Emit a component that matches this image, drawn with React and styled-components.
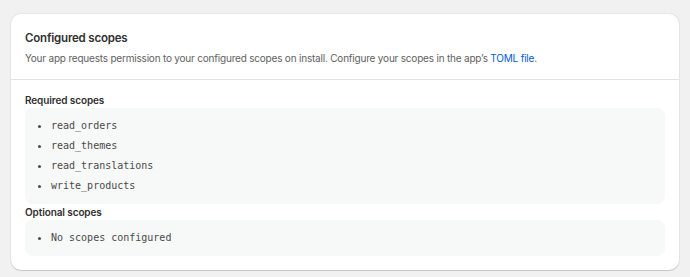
import React from 'react'
import styled, { createGlobalStyle } from 'styled-components'

const required = ['read_orders', 'read_themes', 'read_translations', 'write_products']
const optional = []

const ScopesCard = () => {
  return (
    <Page>
      <GlobalStyle />
      <Card>
        <Header>
          <Title>Configured scopes</Title>
          <Description>
            Your app requests permission to your configured scopes on install. Configure your scopes in the app’s{' '}
            <Link href="#">TOML file</Link>.
          </Description>
        </Header>
        <Body>
          <Label>Required scopes</Label>
          <ScopeBox>
            {required.map((s) => (
              <Scope key={s}>{s}</Scope>
            ))}
          </ScopeBox>
          <Label>Optional scopes</Label>
          <ScopeBox>
            {optional.length ? optional.map((s) => <Scope key={s}>{s}</Scope>) : <Scope>No scopes configured</Scope>}
          </ScopeBox>
        </Body>
      </Card>
    </Page>
  )
}

export default function App() {
  return <ScopesCard />
}

const GlobalStyle = createGlobalStyle`
  html, body {
    margin: 0;
    padding: 0;
    background: #f1f1f1;
    font-family: Inter, "Noto Sans", sans-serif;
    -webkit-font-smoothing: antialiased;
  }
`

const Page = styled.main`
  padding: 14px 11px;
`

const Card = styled.section`
  width: 668px;
  background: #fff;
  border-radius: 10px;
  box-shadow: 0 1px 1px rgba(0, 0, 0, 0.14), 0 0 0 1px rgba(0, 0, 0, 0.04);
  overflow: hidden;
`

const Header = styled.div`
  padding: 14px 14px 11px;
  border-bottom: 1px solid #e3e3e3;
`

const Title = styled.h2`
  margin: 0;
  font-size: 11.5px;
  letter-spacing: -0.2px;
  line-height: 20px;
  font-weight: 600;
  color: #303030;
`

const Description = styled.p`
  margin: 0;
  font-size: 10px;
  letter-spacing: -0.2px;
  line-height: 20px;
  color: #616161;
`

const Link = styled.a`
  color: #005bd3;
  text-decoration: none;
`

const Body = styled.div`
  padding: 12px 14px 14px;
  display: flex;
  flex-direction: column;
`

const Label = styled.h3`
  margin: 0;
  font-size: 10px;
  letter-spacing: -0.1px;
  line-height: 16px;
  font-weight: 600;
  color: #303030;
`

const ScopeBox = styled.ul`
  margin: 0;
  padding: 8px 0;
  list-style: none;
  background: #f7f8f8;
  border-radius: 8px;
`

const Scope = styled.li`
  display: flex;
  align-items: center;
  padding-left: 13px;
  font-family: "DejaVu Sans Mono", "Liberation Mono", monospace;
  font-size: 10px;
  line-height: 20px;
  color: #4a4a4a;

  &::before {
    content: '';
    width: 3px;
    height: 3px;
    border-radius: 50%;
    background: #4a4a4a;
    margin-right: 10px;
  }
`
